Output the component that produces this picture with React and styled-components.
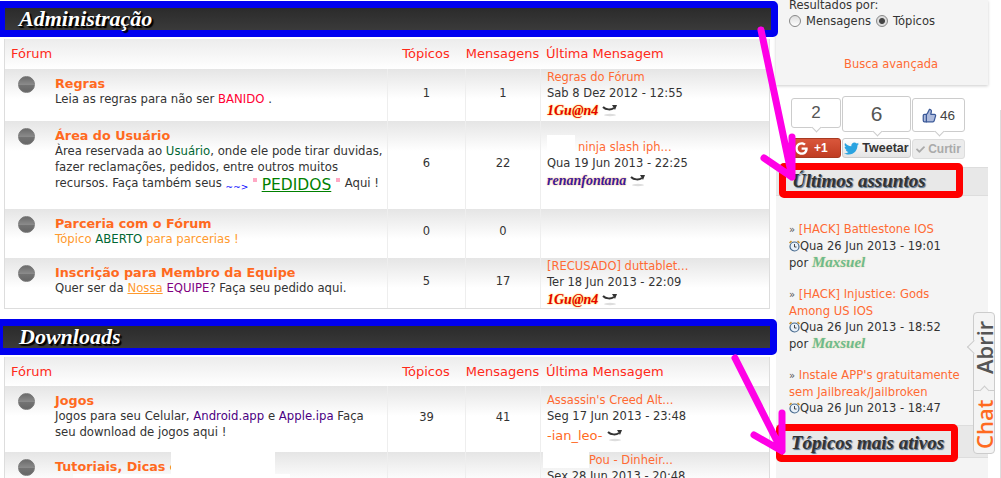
import React from 'react'
import styled, { createGlobalStyle } from 'styled-components'
import { FaTwitter, FaCheck, FaGoogle } from 'react-icons/fa'
import { ThumbsUp } from 'lucide-react'

const GlobalStyle = createGlobalStyle`
  html, body { margin: 0; padding: 0; background: #fff; overflow: hidden; }
  body { font-family: "DejaVu Sans", Verdana, sans-serif; font-size: 11.5px; color: #333; }
  * { box-sizing: border-box; }
`

const Page = styled.div`
  position: relative;
  width: 1001px;
  height: 478px;
  overflow: hidden;
  display: flex;
  align-items: flex-start;
  &:after {
    content: "";
    position: absolute;
    right: 0;
    top: 110px;
    bottom: 0;
    width: 1px;
    background: #ddd;
  }
`

const Main = styled.div`
  width: 776px;
  flex: none;
  padding-top: 1px;
  position: relative;
  z-index: 1;
`

const SectionBar = styled.div`
  height: 36px;
  width: ${p => p.$width}px;
  margin-top: ${p => p.$top}px;
  border: 7px solid #0000f0;
  border-left-width: ${p => p.$left}px;
  border-radius: 0 5px 5px 0;
  background: linear-gradient(#2b2b2b, #3a3a3a);
  display: flex;
  align-items: center;
  padding-left: ${p => 19 - p.$left}px;
`

const SectionTitle = styled.h2`
  margin: 0;
  font-family: "Liberation Serif", serif;
  font-style: italic;
  font-weight: bold;
  font-size: 22px;
  color: #fff;
  text-shadow: 1px 1px 1px #000, 2px 2px 1px #000;
`

const Table = styled.div`
  margin: 2px 0 0 4px;
  width: 766px;
  border-left: 1px solid #ddd;
  border-right: 1px solid #ddd;
  border-bottom: 1px solid #ddd;
`

const Columns = styled.div`
  display: grid;
  grid-template-columns: 382px 78px 75px 1fr;
  height: ${p => p.$h}px;
`

const HeadRow = styled(Columns)`
  background: linear-gradient(#ececec, #fff);
  align-items: center;
  padding-bottom: 1px;
  color: #ff2a1a;
  font-size: 13px;
`

const HeadCell = styled.div`
  text-align: ${p => p.$align || 'center'};
  padding-left: ${p => p.$pad || 0}px;
  white-space: nowrap;
`

const Row = styled(Columns)`
  position: relative;
  background: linear-gradient(#e5e5e5, #fff 30px);
`

const ForumCell = styled.div`
  display: flex;
  padding: 7px 0 0 13px;
`

const Bullet = styled.span`
  flex: none;
  width: 17px;
  height: 17px;
  margin-right: 20px;
  border-radius: 50%;
  border: 1px solid #777;
  background: linear-gradient(#6c6c6c, #8a8a8a 50%, #747474 52%, #666);
`

const ForumText = styled.div`
  line-height: 16px;
  width: 330px;
  font-size: 11.7px;
`

const ForumTitle = styled.div`
  color: #ff6a1f;
  font-weight: bold;
  font-size: 12.75px;
  line-height: 15px;
  white-space: nowrap;
`

const Tone = styled.span`
  color: ${p => p.$c};
  text-decoration: ${p => (p.$u ? 'underline' : 'none')};
`

const Pedidos = styled.span`
  color: #008000;
  font-size: 15.5px;
  line-height: 0;
  vertical-align: -3px;
  text-decoration: underline;
`

const Small = styled.span`
  color: #0000ff;
  font-size: 9px;
  line-height: 0;
  vertical-align: -3px;
`

const Dot = styled.span`
  display: inline-block;
  width: 4px;
  height: 4px;
  margin: 0 1px;
  vertical-align: 5px;
  background: #ffa8c4;
`

const CountCell = styled.div`
  display: flex;
  align-items: center;
  justify-content: center;
  padding-bottom: 5px;
  border-left: 1px solid #eee;
`

const LastCell = styled.div`
  border-left: 1px solid #eee;
  padding: ${p => p.$top}px 0 0 6px;
  line-height: 16px;
  white-space: nowrap;
`

const LastLink = styled.div`
  color: #ff6a33;
  display: flex;
  align-items: flex-end;
`

const BlankTag = styled.span`
  display: inline-block;
  width: ${p => p.$w}px;
  height: ${p => p.$h}px;
  margin-left: ${p => p.$shift}px;
  margin-right: ${p => p.$after}px;
  background: #fff;
`

const Author = styled.div`
  display: flex;
  align-items: center;
  gap: 4px;
  margin-top: 2px;
`

const ScriptName = styled.span`
  font-family: "Liberation Serif", serif;
  font-style: italic;
  font-weight: bold;
  font-size: ${p => p.$size || 14}px;
  line-height: 16px;
  color: ${p => p.$c};
  text-shadow: 0 0 2px ${p => p.$glow};
`

const PlainName = styled.span`
  color: #ff6a1f;
  font-size: 13px;
  line-height: 20px;
`

const Cover = styled.div`
  position: absolute;
  left: ${p => p.$x}px;
  top: ${p => p.$y}px;
  width: ${p => p.$w}px;
  height: ${p => p.$h}px;
  background: #fff;
`

const Side = styled.aside`
  width: 212px;
  flex: none;
  height: 478px;
  display: flex;
  flex-direction: column;
`

const SearchPanel = styled.div`
  height: 85px;
  flex: none;
  background: #f4f4f4;
  box-shadow: 0 1px 3px #ccc;
  padding: 0 13px;
  line-height: 16px;
`

const ResultLabel = styled.div`
  margin-top: -3px;
`

const RadioRow = styled.div`
  display: flex;
  align-items: center;
`

const Radio = styled.input.attrs({ type: 'radio', readOnly: true })`
  appearance: none;
  width: 12px;
  height: 12px;
  margin: 0 5px 0 0;
  border-radius: 50%;
  border: 1px solid #888;
  background: ${p => (p.checked
    ? 'radial-gradient(circle, #444 0 2.5px, #ddd 3.5px)'
    : 'linear-gradient(#ddd, #fff)')};
`

const RadioLabel = styled.label`
  margin-right: 5px;
`

const AdvancedLink = styled.div`
  color: #ff6a33;
  margin: 27px 0 0 55px;
`

const Social = styled.div`
  height: 82px;
  flex: none;
  padding: 11px 0 0 15px;
  display: grid;
  grid-template-columns: 50px 69px 53px;
  column-gap: 1px;
`

const SocialCol = styled.div`
  display: flex;
  flex-direction: column;
`

const CountBox = styled.div`
  position: relative;
  height: ${p => p.$h}px;
  margin-top: ${p => p.$top}px;
  margin-bottom: ${p => p.$gap}px;
  border: 1px solid #ccc;
  border-radius: 3px;
  background: #fff;
  display: flex;
  align-items: center;
  justify-content: center;
  gap: 3px;
  color: ${p => p.$c || '#555'};
  font-family: "Liberation Sans", sans-serif;
  font-size: ${p => p.$size}px;
  &:after {
    content: "";
    position: absolute;
    left: 50%;
    bottom: -4px;
    width: 6px;
    height: 6px;
    margin-left: -3px;
    transform: rotate(45deg);
    background: #fff;
    border-right: 1px solid #ccc;
    border-bottom: 1px solid #ccc;
  }
`

const ShareButton = styled.div`
  height: 20px;
  border-radius: 3px;
  display: flex;
  align-items: center;
  justify-content: ${p => p.$justify || 'center'};
  gap: ${p => p.$gap || 3}px;
  padding-left: ${p => p.$pad || 0}px;
  font-family: "Liberation Sans", sans-serif;
  font-weight: bold;
  font-size: ${p => p.$size || 12}px;
  color: ${p => p.$c};
  background: ${p => p.$bg};
  border: 1px solid ${p => p.$line};
`

const SideHead = styled.div`
  height: ${p => p.$h}px;
  flex: none;
  background: #e8e8e8;
  border-top: 1px solid #ddd;
  border-bottom: 1px solid #ddd;
  display: flex;
  align-items: flex-start;
  position: relative;
  z-index: 2;
`

const RedBox = styled.div`
  flex: none;
  width: ${p => p.$w}px;
  height: ${p => p.$h}px;
  margin: ${p => p.$up}px 0 0 ${p => p.$left}px;
  border: 7px solid #ff0000;
  border-radius: 5px;
  background: #e8e8e8;
  display: flex;
  align-items: center;
  padding-left: ${p => p.$pad}px;
  font-family: "Liberation Serif", serif;
  font-style: italic;
  font-weight: bold;
  font-size: 19px;
  white-space: nowrap;
  color: #333;
  text-shadow: 1px 1px 1px #4a6a8a;
`

const SideBody = styled.div`
  flex: none;
  background: #f4f4f4;
  padding: 25px 13px 9px;
  line-height: 16px;
  display: flex;
  flex-direction: column;
  gap: 16px;
  font-size: 11.6px;
`

const SideRest = styled.div`
  flex: 1;
  background: #f4f4f4;
`

const Topic = styled.div`
  width: 180px;
`

const TopicLink = styled.span`
  color: #ff6a33;
`

const Quote = styled.span`
  color: #555;
  font-size: 10px;
`

const DateLine = styled.div`
  display: flex;
  align-items: center;
  height: 16px;
  white-space: nowrap;
  font-size: 11.5px;
`

const ByLine = styled.div`
  height: 16px;
`

const ChatTab = styled.div`
  position: absolute;
  z-index: 4;
  left: 973px;
  top: 312px;
  width: 22px;
  height: 142px;
  border: 1px solid #ccc;
  border-radius: 4px;
  background: #f4f4f4;
  display: flex;
  flex-direction: column;
  font-family: "Open Sans", sans-serif;
  &:before {
    content: "";
    position: absolute;
    left: -5px;
    top: 29px;
    width: 9px;
    height: 9px;
    transform: rotate(45deg);
    background: #f4f4f4;
    border-left: 1px solid #ccc;
    border-bottom: 1px solid #ccc;
  }
  &:after {
    content: "";
    position: absolute;
    left: 7px;
    top: 74px;
    width: 6px;
    height: 6px;
    transform: rotate(45deg);
    background: #f4f4f4;
    border-left: 1px solid #ccc;
    border-top: 1px solid #ccc;
  }
`

const TabPart = styled.div`
  height: ${p => p.$h}px;
  writing-mode: vertical-rl;
  transform: rotate(180deg);
  display: flex;
  align-items: center;
  justify-content: center;
  padding: ${p => p.$pt || 0}px 0 ${p => p.$pb || 0}px;
  font-size: 22px;
  font-weight: 600;
  line-height: 20px;
  color: ${p => p.$c};
  border-bottom: ${p => (p.$split ? '1px solid #ccc' : 'none')};
`

const Arrows = styled.svg`
  position: absolute;
  inset: 0;
  z-index: 3;
  pointer-events: none;
`

function PostIcon() {
  return (
    <svg width="16" height="14" viewBox="0 0 16 14">
      <path d="M1 3c3 3 8 3 11 1" fill="none" stroke="#333" strokeWidth="2" />
      <path d="M10 1l5 0-2 5z" fill="#333" />
      <ellipse cx="8" cy="11" rx="6" ry="1.2" fill="#ddd" />
    </svg>
  )
}

function ClockIcon() {
  return (
    <svg width="11" height="12" viewBox="0 0 11 12">
      <circle cx="5.5" cy="6.5" r="4.5" fill="#e8f0f8" stroke="#44688c" strokeWidth="1.2" />
      <path d="M5.5 4v3h2" fill="none" stroke="#444" />
      <path d="M0.5 3l2-2M10.5 3l-2-2" stroke="#c8902a" strokeWidth="1.5" />
    </svg>
  )
}

const admin = [
  {
    h: 52, top: 0, title: 'Regras', t: 1, m: 1,
    desc: <>Leia as regras para não ser <Tone $c="#ff0033">BANIDO</Tone> .</>,
    last: 'Regras do Fórum', date: 'Sab 8 Dez 2012 - 12:55',
    who: <ScriptName $c="#e60000" $glow="#ffd000">1Gu@n4</ScriptName>,
  },
  {
    h: 88, top: 14, title: 'Área do Usuário', t: 6, m: 22, blank: 28, blankH: 20, after: 3,
    desc: (
      <>
        Àrea reservada ao <Tone $c="#006633">Usuário</Tone>, onde ele pode tirar duvidas, fazer reclamações, pedidos, entre outros muitos recursos. Faça também seus{' '}
        <Small>~~&gt;</Small> <Dot /> <Pedidos>PEDIDOS</Pedidos> <Dot /> Aqui !
      </>
    ),
    last: 'ninja slash iph...', date: 'Qua 19 Jun 2013 - 22:25',
    who: <ScriptName $c="#3b1a9c" $glow="#ffb060">renanfontana</ScriptName>,
  },
  {
    h: 49, title: 'Parceria com o Fórum', t: 0, m: 0,
    desc: <Tone $c="#ff9a2e">Tópico <Tone $c="#006633">ABERTO</Tone> para parcerias !</Tone>,
  },
  {
    h: 50, top: 0, title: 'Inscrição para Membro da Equipe', t: 5, m: 17,
    desc: <>Quer ser da <Tone $c="#ff9a2e" $u>Nossa</Tone> <Tone $c="#800080">EQUIPE</Tone>? Faça seu pedido aqui.</>,
    last: '[RECUSADO] duttablet...', date: 'Ter 18 Jun 2013 - 22:09',
    who: <ScriptName $c="#e60000" $glow="#ffd000">1Gu@n4</ScriptName>,
  },
]

const downloads = [
  {
    h: 66, top: 6, title: 'Jogos', t: 39, m: 41,
    desc: <>Jogos para seu Celular, <Tone $c="#4b0082">Android.app</Tone> e <Tone $c="#4b0082">Apple.ipa</Tone> Faça seu download de jogos aqui !</>,
    last: "Assassin's Creed Alt...", date: 'Seg 17 Jun 2013 - 23:48',
    who: <PlainName>-ian_leo-</PlainName>,
  },
  {
    h: 66, top: 0, title: 'Tutoriais, Dicas e', t: 44, m: 126, blank: 46, blankH: 16, shift: -4, after: 0,
    desc: '', cover: true,
    last: 'Pou - Dinheir...', date: 'Sex 28 Jun 2013 - 20:48',
  },
]

const topics = [
  { title: '[HACK] Battlestone IOS', date: 'Qua 26 Jun 2013 - 19:01', by: 'Maxsuel' },
  { title: '[HACK] Injustice: Gods Among US IOS', date: 'Qua 26 Jun 2013 - 18:52', by: 'Maxsuel' },
  { title: "Instale APP's gratuitamente sem Jailbreak/Jailbroken", date: 'Qua 26 Jun 2013 - 18:47' },
]

function ForumSection({ title, width, top, left, rows, headH }) {
  return (
    <>
      <SectionBar $width={width} $top={top} $left={left}>
        <SectionTitle>{title}</SectionTitle>
      </SectionBar>
      <Table>
        <HeadRow $h={headH}>
          <HeadCell $align="left" $pad={6}>Fórum</HeadCell>
          <HeadCell>Tópicos</HeadCell>
          <HeadCell>Mensagens</HeadCell>
          <HeadCell $align="left" $pad={6}>Última Mensagem</HeadCell>
        </HeadRow>
        {rows.map(r => (
          <Row key={r.title} $h={r.h}>
            <ForumCell>
              <Bullet />
              <ForumText>
                <ForumTitle>{r.title}</ForumTitle>
                {r.desc}
              </ForumText>
            </ForumCell>
            <CountCell>{r.t}</CountCell>
            <CountCell>{r.m}</CountCell>
            <LastCell $top={r.top}>
              {r.last && (
                <LastLink>
                  {r.blank && <BlankTag $w={r.blank} $h={r.blankH} $shift={r.shift || 0} $after={r.after} />}
                  {r.last}
                </LastLink>
              )}
              {r.date}
              {r.who && <Author>{r.who}<PostIcon /></Author>}
            </LastCell>
            {r.cover && <Cover $x={166} $y={0} $w={104} $h={22} />}
            {r.cover && <Cover $x={68} $y={22} $w={217} $h={10} />}
          </Row>
        ))}
      </Table>
    </>
  )
}

export default function App() {
  return (
    <Page>
      <GlobalStyle />
      <Main>
        <ForumSection title="Administração" width={778} top={0} left={5} rows={admin} headH={30} />
        <ForumSection title="Downloads" width={777} top={10} left={3} rows={downloads} headH={29} />
      </Main>

      <Side>
        <SearchPanel>
          <ResultLabel>Resultados por:</ResultLabel>
          <RadioRow>
            <Radio name="r" />
            <RadioLabel>Mensagens</RadioLabel>
            <Radio name="r" checked />
            <RadioLabel>Tópicos</RadioLabel>
          </RadioRow>
          <AdvancedLink>Busca avançada</AdvancedLink>
        </SearchPanel>

        <Social>
          <SocialCol>
            <CountBox $h={30} $top={2} $gap={10} $size={17}>2</CountBox>
            <ShareButton $c="#fff" $bg="linear-gradient(#d9573b, #c03c22)" $line="#a83a22" $justify="flex-start" $pad={3} $gap={6}>
              <FaGoogle size={13} />+1
            </ShareButton>
          </SocialCol>
          <SocialCol>
            <CountBox $h={36} $top={0} $gap={6} $size={21}>6</CountBox>
            <ShareButton $c="#333" $bg="linear-gradient(#fff, #e4e4e4)" $line="#ccc" $size={12.5}>
              <FaTwitter size={15} color="#2aa3e0" />Tweetar
            </ShareButton>
          </SocialCol>
          <SocialCol>
            <CountBox $h={34} $top={2} $gap={7} $size={13.5} $c="#444">
              <ThumbsUp size={15} color="#3b5998" fill="#aebbdc" />46
            </CountBox>
            <ShareButton $c="#aaa" $bg="#ececec" $line="#ddd" $size={12}>
              <FaCheck size={9} />Curtir
            </ShareButton>
          </SocialCol>
        </Social>

        <SideHead $h={29}>
          <RedBox $w={184} $h={35} $up={-5} $left={3} $pad={6}>Últimos assuntos</RedBox>
        </SideHead>

        <SideBody>
          {topics.map(t => (
            <Topic key={t.title}>
              <Quote>»</Quote> <TopicLink>{t.title}</TopicLink>
              <DateLine><ClockIcon />{t.date}</DateLine>
              {t.by && (
                <ByLine>por <ScriptName $c="#6dbb8c" $glow="#e8d8a0" $size={15}>{t.by}</ScriptName></ByLine>
              )}
            </Topic>
          ))}
        </SideBody>

        <SideHead $h={33}>
          <RedBox $w={182} $h={38} $up={-2} $left={0} $pad={8}>Tópicos mais ativos</RedBox>
        </SideHead>
        <SideRest />
      </Side>

      <Arrows width="1001" height="478" viewBox="0 0 1001 478">
        <g fill="none" stroke="#ff00e6" strokeWidth="7" strokeLinecap="round" strokeLinejoin="round">
          <path d="M761 30L792 177M764 158L792 177L792 137" />
          <path d="M735 358L782 451M754 435L782 451L782 413" />
        </g>
      </Arrows>

      <ChatTab>
        <TabPart $h={77} $c="#555" $pt={8}>Abrir</TabPart>
        <TabPart $h={63} $c="#ff6a1f" $pb={4} $split>Chat</TabPart>
      </ChatTab>
    </Page>
  )
}
